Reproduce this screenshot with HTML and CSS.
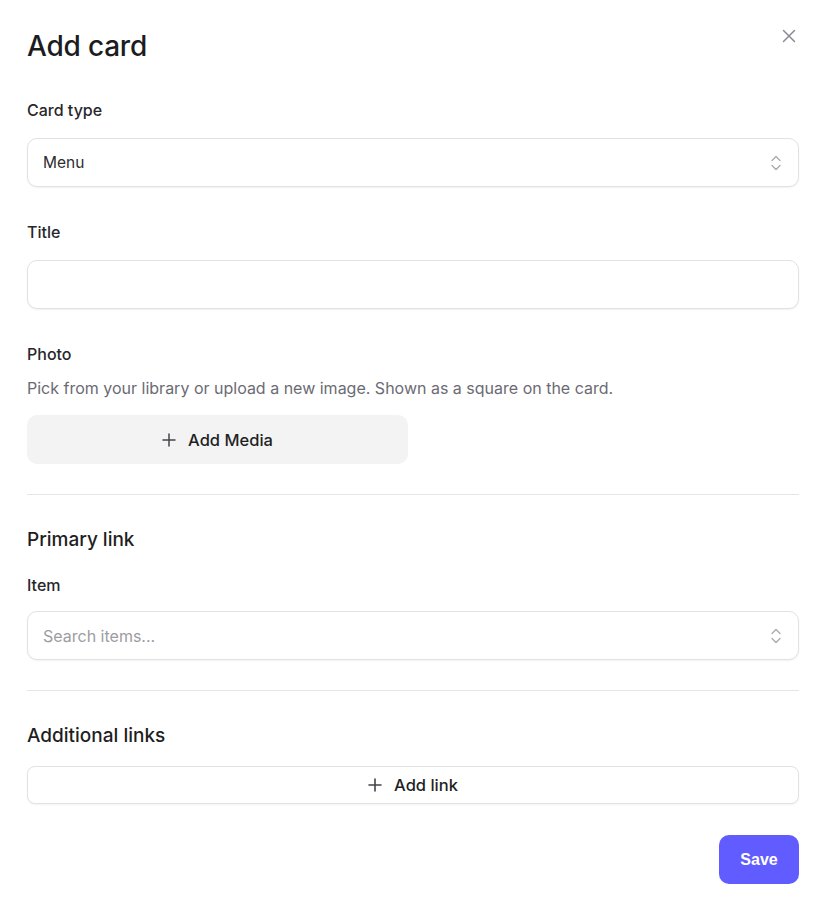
FILE: index.html
```html
<!DOCTYPE html>
<html lang="en">
<head>
    <meta charset="UTF-8">
    <meta name="viewport" content="width=device-width, initial-scale=1.0">
    <title>Add card</title>
    <link rel="stylesheet" href="styles.css">
</head>
<body>
    <div class="dialog">
        <div class="dialog-header">
            <h1>Add card</h1>
            <button class="close-btn" aria-label="Close">
                <svg width="14" height="14" viewBox="0 0 14 14" fill="none" stroke="currentColor" stroke-width="1.5" stroke-linecap="round">
                    <path d="M1.5 1.5l11 11M12.5 1.5l-11 11"/>
                </svg>
            </button>
        </div>

        <div class="field">
            <label class="label">Card type</label>
            <div class="select">
                <span>Menu</span>
                <svg class="chevrons" width="12" height="18" viewBox="0 0 12 18" fill="none" stroke="currentColor" stroke-width="1.3" stroke-linecap="round" stroke-linejoin="round">
                    <path d="M2 6.5l4-4 4 4M2 11.5l4 4 4-4"/>
                </svg>
            </div>
        </div>

        <div class="field">
            <label class="label">Title</label>
            <div class="input"></div>
        </div>

        <div class="field">
            <label class="label">Photo</label>
            <p class="hint">Pick from your library or upload a new image. Shown as a square on the card.</p>
            <button class="media-btn">
                <svg width="14" height="14" viewBox="0 0 14 14" fill="none" stroke="currentColor" stroke-width="1.5" stroke-linecap="round">
                    <path d="M7 1v12M1 7h12"/>
                </svg>
                Add Media
            </button>
        </div>

        <hr class="divider">

        <h2 class="section-title">Primary link</h2>
        <div class="field">
            <label class="label label-tight">Item</label>
            <div class="select">
                <span class="placeholder">Search items...</span>
                <svg class="chevrons" width="12" height="18" viewBox="0 0 12 18" fill="none" stroke="currentColor" stroke-width="1.3" stroke-linecap="round" stroke-linejoin="round">
                    <path d="M2 6.5l4-4 4 4M2 11.5l4 4 4-4"/>
                </svg>
            </div>
        </div>

        <hr class="divider">

        <h2 class="section-title">Additional links</h2>
        <button class="link-btn">
            <svg width="14" height="14" viewBox="0 0 14 14" fill="none" stroke="currentColor" stroke-width="1.6" stroke-linecap="round">
                <path d="M7 1v12M1 7h12"/>
            </svg>
            Add link
        </button>

        <div class="footer">
            <button class="save-btn">Save</button>
        </div>
    </div>
</body>
</html>
```

FILE: styles.css
```css
* {
    margin: 0;
    padding: 0;
    box-sizing: border-box;
}

body {
    background: #ffffff;
    font-family: Inter, "Noto Sans", sans-serif;
    color: #1f1f23;
}

.dialog {
    width: 825px;
    min-height: 909px;
    padding: 28px 26px 25px 27px;
    display: flex;
    flex-direction: column;
}

.dialog-header {
    display: flex;
    justify-content: space-between;
    align-items: flex-start;
    margin-bottom: 36px;
}

.dialog-header h1 {
    font-size: 28px;
    font-weight: 500;
    line-height: 36px;
    letter-spacing: -0.2px;
    color: #1c1c1f;
}

.close-btn {
    border: none;
    background: none;
    color: #8a8a93;
    width: 14px;
    height: 14px;
    margin-top: 1px;
    margin-right: 3px;
    display: flex;
    cursor: pointer;
}

.field {
    display: flex;
    flex-direction: column;
    margin-bottom: 35px;
}

.field:first-of-type {
    margin-bottom: 34px;
}

.label {
    font-size: 16px;
    font-weight: 500;
    line-height: 20px;
    color: #27272b;
    margin-bottom: 18px;
}

.label-tight {
    margin-bottom: 16px;
}

.select,
.input {
    height: 49px;
    border: 1px solid #e2e2e5;
    border-radius: 10px;
    background: #fff;
    box-shadow: 0 1px 2px rgba(0, 0, 0, 0.06);
    display: flex;
    align-items: center;
    justify-content: space-between;
    padding: 0 16px 0 15px;
    font-size: 15.5px;
    color: #2c2c31;
}

.placeholder {
    font-size: 16px;
    color: #9c9ca3;
}

.chevrons {
    color: #a8a8af;
}

.hint {
    font-size: 16px;
    line-height: 20px;
    color: #6b6b73;
    margin-top: -4px;
    margin-bottom: 17px;
}

.media-btn {
    width: 381px;
    height: 49px;
    border: none;
    border-radius: 10px;
    background: #f3f3f4;
    display: flex;
    align-items: center;
    justify-content: center;
    gap: 12px;
    font-family: inherit;
    font-size: 16.5px;
    font-weight: 500;
    color: #1f1f23;
    cursor: pointer;
}

.media-btn svg,
.link-btn svg {
    color: #44444a;
}

.divider {
    border: none;
    border-top: 1px solid #e5e5e8;
    margin-top: -5px;
    margin-bottom: 33px;
}

.section-title {
    font-size: 19px;
    font-weight: 500;
    line-height: 24px;
    color: #1f1f23;
    margin-bottom: 23px;
}

.section-title + .link-btn {
    margin-top: -5px;
}

.link-btn {
    height: 38px;
    border: 1px solid #e2e2e5;
    border-radius: 8px;
    background: #fff;
    box-shadow: 0 1px 2px rgba(0, 0, 0, 0.05);
    display: flex;
    align-items: center;
    justify-content: center;
    gap: 12px;
    font-family: inherit;
    font-size: 16.5px;
    font-weight: 500;
    color: #1f1f23;
    cursor: pointer;
}

.footer {
    display: flex;
    justify-content: flex-end;
    margin-top: 31px;
}

.save-btn {
    width: 80px;
    height: 49px;
    border: none;
    border-radius: 10px;
    background: #615cff;
    color: #fff;
    font-family: "Liberation Sans", Arial, sans-serif;
    font-size: 16px;
    font-weight: 700;
    cursor: pointer;
}
```
